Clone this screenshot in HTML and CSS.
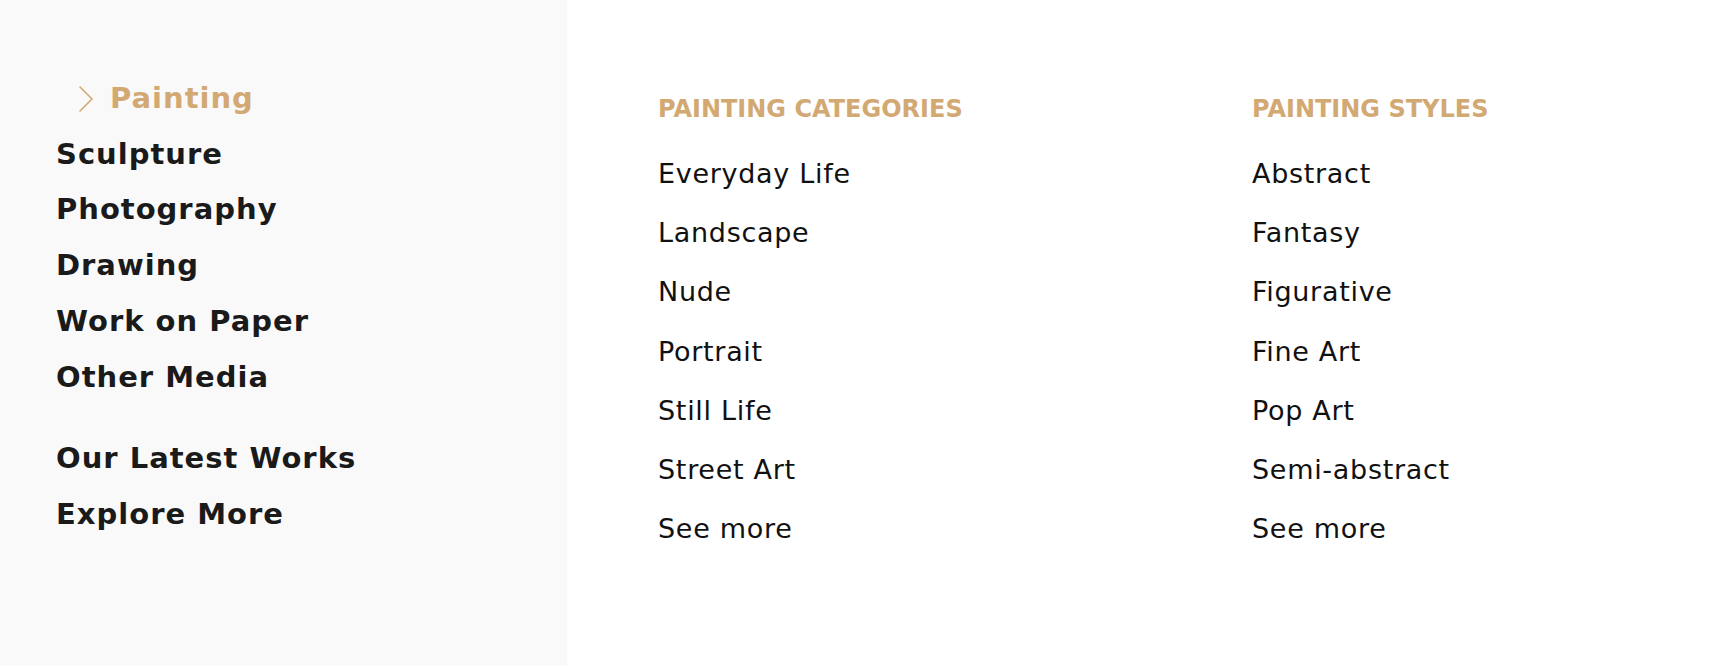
FILE: index.html
```html
<!DOCTYPE html>
<html lang="en">
<head>
<meta charset="utf-8">
<title>Painting menu</title>
<link rel="stylesheet" href="styles.css">
</head>
<body>
<div class="mega">
  <aside class="side">
    <ul class="side-list">
      <li class="side-item active">
        <svg class="chev" width="16" height="26" viewBox="0 0 16 26" aria-hidden="true"><polyline points="2,1 14,13 2,25" fill="none" stroke="#d3a973" stroke-width="1.6" stroke-linecap="round" stroke-linejoin="round"/></svg>
        <span>Painting</span>
      </li>
      <li class="side-item">Sculpture</li>
      <li class="side-item">Photography</li>
      <li class="side-item">Drawing</li>
      <li class="side-item">Work on Paper</li>
      <li class="side-item">Other Media</li>
    </ul>
    <ul class="side-list extra">
      <li class="side-item">Our Latest Works</li>
      <li class="side-item">Explore More</li>
    </ul>
  </aside>
  <main class="panel">
    <section class="col">
      <h3 class="col-title">PAINTING CATEGORIES</h3>
      <ul class="col-list">
        <li>Everyday Life</li>
        <li>Landscape</li>
        <li>Nude</li>
        <li>Portrait</li>
        <li>Still Life</li>
        <li>Street Art</li>
        <li>See more</li>
      </ul>
    </section>
    <section class="col">
      <h3 class="col-title">PAINTING STYLES</h3>
      <ul class="col-list">
        <li>Abstract</li>
        <li>Fantasy</li>
        <li>Figurative</li>
        <li>Fine Art</li>
        <li>Pop Art</li>
        <li>Semi-abstract</li>
        <li>See more</li>
      </ul>
    </section>
  </main>
</div>
</body>
</html>
```
FILE: styles.css
```css
* { box-sizing: border-box; }
html, body { margin: 0; padding: 0; background: #ffffff; }
body { font-family: "DejaVu Sans", "Noto Sans", sans-serif; }

.mega {
  display: flex;
  height: 666px;
  overflow: hidden;
}

.side {
  width: 567px;
  flex: none;
  background: #f9f9f9;
  padding: 71px 0 0 56px;
}

.side-list {
  list-style: none;
  margin: 0;
  padding: 0;
}

.side-list.extra { margin-top: 26px; }

.side-item {
  font-size: 29px;
  font-weight: 700;
  letter-spacing: 1px;
  line-height: 55.7px;
  color: #1a1a1a;
  white-space: nowrap;
}

.side-item.active {
  display: flex;
  align-items: center;
  color: #d3a973;
}

.chev {
  margin-left: 22px;
  margin-right: 16px;
  flex: none;
}

.panel {
  flex: 1;
  min-width: 0;
  display: grid;
  grid-template-columns: 594px 1fr;
  align-content: start;
  padding: 94px 0 0 91px;
}

.col-title {
  margin: 0 0 20px;
  font-size: 24px;
  line-height: 30px;
  font-weight: 700;
  color: #d3a973;
  white-space: nowrap;
}

.col-list {
  list-style: none;
  margin: 0;
  padding: 0;
}

.col-list li {
  font-size: 27px;
  letter-spacing: 0.7px;
  line-height: 59.2px;
  color: #111111;
  white-space: nowrap;
}
```
